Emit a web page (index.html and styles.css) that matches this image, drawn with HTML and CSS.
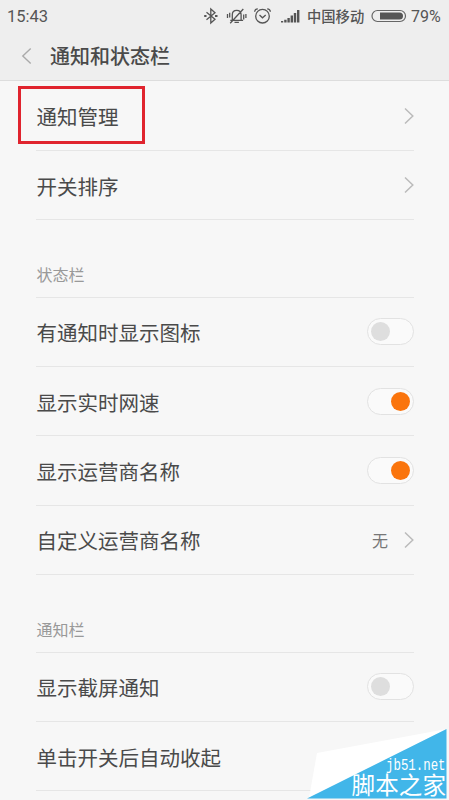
FILE: index.html
```html
<!DOCTYPE html>
<html lang="zh-CN">
<head>
    <meta charset="UTF-8">
    <meta name="viewport" content="width=device-width, initial-scale=1.0">
    <title>通知和状态栏</title>
    <link rel="stylesheet" href="styles.css">
</head>
<body>
    <header>
        <div class="status">
            <span class="time">15:43</span>
            <svg class="icons" width="98" height="20" viewBox="0 0 98 20" fill="none" stroke="#555" stroke-width="1.3">
                <!-- bluetooth -->
                <path d="M3.500 6.200l8.500 7-4.200 3.800V3l4.200 3.800-8.500 7"/>
                <path d="M1.200 10h2.300M12 10h2.500" stroke-width="2"/>
                <!-- muted bell -->
                <path d="M27.300 14.300h12.800M29.300 14V8.700c0-2.800 1.700-4.300 4.400-4.300s4.400 1.500 4.400 4.300V14M31.500 16.300h4.400M40.300 3L27.200 17.200M24.500 8v4M26.700 6.800v4.800M40.700 8.500v5M42.900 8v4"/>
                <!-- alarm -->
                <circle cx="59.500" cy="10.200" r="6.800"/>
                <path d="M56.500 9l3 2.800 3.200-2.800M51.600 5.800c.2-1.900 1.300-3 3.200-3M67.400 5.800c-.2-1.900-1.300-3-3.200-3"/>
                <!-- signal -->
                <g fill="#555" stroke="none">
                    <path d="M78 15h2.200v1.500H78zM81.200 13.800h2.400v2.700h-2.400zM84.400 12h2.400v4.500h-2.400zM87.600 9.500H90v7h-2.400zM90.800 7h2.400v9.500h-2.400zM94 4h2.400v12.500H94z"/>
                </g>
            </svg>
            <span class="carrier">中国移动</span>
            <svg class="battery" width="36" height="14" viewBox="0 0 36 14">
                <rect x="1" y="1.500" width="33.500" height="11" rx="5.500" fill="none" stroke="#666" stroke-width="1.200"/>
                <path d="M9 3.500h19.500a3.500 3.500 0 0 1 0 7H9z" fill="#555"/>
            </svg>
            <span class="percent">79%</span>
        </div>
        <div class="title">
            <svg width="11" height="18" viewBox="0 0 11 18"><path d="M9.700 1.500L1.800 9l7.900 7.500" fill="none" stroke="#aaa" stroke-width="1.400"/></svg>
            <h1>通知和状态栏</h1>
        </div>
    </header>
    <main>
        <div class="row">
            <span>通知管理</span>
            <svg class="arrow" viewBox="0 0 10 18"><path d="M1 1.500L8.800 9 1 16.500"/></svg>
            <div class="mark"></div>
        </div>
        <div class="row">
            <span>开关排序</span>
            <svg class="arrow" viewBox="0 0 10 18"><path d="M1 1.500L8.800 9 1 16.500"/></svg>
        </div>
        <h2>状态栏</h2>
        <div class="row">
            <span>有通知时显示图标</span>
            <div class="switch"></div>
        </div>
        <div class="row">
            <span>显示实时网速</span>
            <div class="switch on"></div>
        </div>
        <div class="row">
            <span>显示运营商名称</span>
            <div class="switch on"></div>
        </div>
        <div class="row">
            <span>自定义运营商名称</span>
            <span class="value">无</span>
            <svg class="arrow" viewBox="0 0 10 18"><path d="M1 1.500L8.800 9 1 16.500"/></svg>
        </div>
        <h2>通知栏</h2>
        <div class="row">
            <span>显示截屏通知</span>
            <div class="switch"></div>
        </div>
        <div class="row">
            <span>单击开关后自动收起</span>
        </div>
    </main>
    <svg class="watermark" width="142" height="72" viewBox="0 0 142 72">
        <path d="M2 70L10 25 139.500 1z" fill="#fff"/>
        <path d="M0 70.500L139.500 1v69.500z" fill="#41b6e9"/>
        <text class="site" x="79" y="42" textLength="59.500" lengthAdjust="spacingAndGlyphs">jb51.net</text>
        <text class="name" x="44.500" y="65.500" textLength="94.500">脚本之家</text>
    </svg>
</body>
</html>
```
FILE: styles.css
```css
* {
    box-sizing: border-box;
}
body {
    margin: 0;
    height: 800px;
    position: relative;
    overflow: hidden;
    font-family: Roboto, "Noto Sans CJK SC", sans-serif;
    color: #4a4a4a;
    background-color: #f7f7f7;
}
header {
    height: 81px;
    background-color: #eee;
    border-bottom: 1px solid #ddd;
}
.status {
    display: flex;
    align-items: center;
    height: 32px;
    padding-left: 7px;
    color: #555;
}
.time {
    width: 196px;
    font-size: 16.5px;
}
.icons {
    flex: none;
}
.carrier {
    margin-left: 6px;
    width: 58px;
    font-size: 14.3px;
    font-weight: 500;
    font-family: "Noto Sans CJK SC", sans-serif;
    line-height: 18px;
    white-space: nowrap;
}
.battery {
    flex: none;
    margin-left: 6px;
}
.percent {
    margin-left: 4px;
    font-size: 16px;
}
.title {
    display: flex;
    align-items: center;
    height: 48px;
    padding-left: 21px;
}
h1 {
    margin: 2px 0 0 18px;
    font-size: 20px;
    font-weight: 500;
    line-height: 28px;
}
main {
    padding: 0.6px 35px 0 36px;
}
.row {
    display: flex;
    align-items: center;
    position: relative;
    height: 69.35px;
    border-bottom: 1px solid #e6e6e6;
    font-size: 20.5px;
}
.row span:first-child {
    flex: 1;
    padding-left: 0.6px;
    padding-top: 1px;
}
.row .value {
    margin-right: 16px;
    font-size: 16px;
    color: #777;
}
.arrow {
    width: 10px;
    height: 18px;
    fill: none;
    stroke: #bbb;
    stroke-width: 1.5;
}
h2 {
    display: flex;
    align-items: flex-end;
    height: 77.5px;
    margin: 0;
    padding: 0 0 11px 0.5px;
    border-bottom: 1px solid #e6e6e6;
    font-size: 16px;
    font-weight: 400;
    color: #999;
}
.switch {
    display: flex;
    align-items: center;
    width: 47px;
    height: 27px;
    padding: 0 3px;
    border: 1px solid #e2e2e2;
    border-radius: 14px;
    background-color: #fafafa;
}
.switch::before {
    content: "";
    width: 19px;
    height: 19px;
    border-radius: 50%;
    background-color: #dedede;
}
.switch.on {
    justify-content: flex-end;
}
.switch.on::before {
    background-color: #fa740c;
}
.mark {
    position: absolute;
    left: -18px;
    top: 4.4px;
    width: 127px;
    height: 58px;
    border: 3px solid #e0242e;
}
.watermark {
    position: absolute;
    left: 307px;
    top: 728px;
}
.watermark text {
    fill: #fff;
}
.site {
    font: 16px "Liberation Mono", monospace;
}
.name {
    font: 23.5px "Noto Sans CJK SC", sans-serif;
}
```
